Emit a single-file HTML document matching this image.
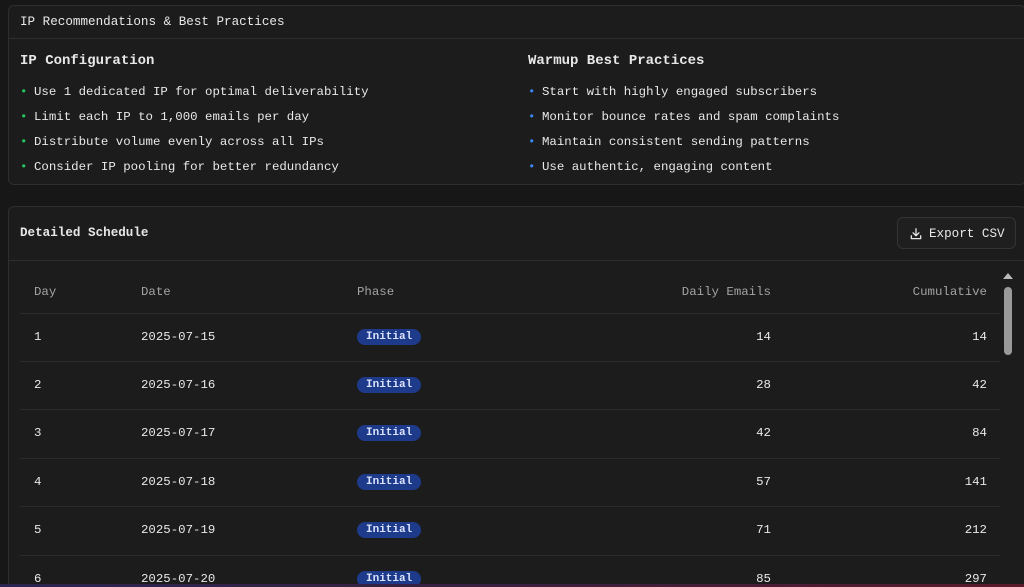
<!DOCTYPE html>
<html><head><style>
*{box-sizing:border-box;margin:0;padding:0}
html,body{width:1024px;height:587px;overflow:hidden}
body{background:#171717;font-family:"Liberation Mono",monospace;color:#e8e8e8;font-size:12.4px;position:relative}
.card{position:absolute;left:8px;right:-2px;background:#1c1c1c;border:1px solid #2e2e2e;border-radius:6px}
.c1{top:5px;height:180px}
.hd{height:33px;border-bottom:1px solid #2e2e2e;padding:9px 11px;font-size:12.6px}
.col{position:absolute;top:47px}
.col h3{font-size:14px;font-weight:bold;margin-bottom:13px;height:18px}
.col li{list-style:none;height:25px;line-height:17px}
.col li b{display:inline-block;width:14px;font-weight:normal}
.c2{top:206px;height:400px}
.btn{position:absolute;left:888px;top:10px;width:119px;height:32px;border:1px solid #333;border-radius:6px;background:#1f1f1f;font-size:12.6px;padding:9px 0 0 31px}
.btn svg{position:absolute;left:11px;top:9px}
.row{position:absolute;left:0;width:981px;border-bottom:1px solid #2b2b2b}
.row span{position:absolute}
.pill{background:#1e3a8a;color:#dbe4ff;border-radius:10px;padding:2px 9px;font-size:11px;font-weight:bold}
.sb{position:absolute;left:1000px;top:270px;width:14px;height:320px;background:#1c1c1c}
.th{position:absolute;left:1004px;top:287px;width:8px;height:68px;background:#9a9a9a;border-radius:4px}
</style></head><body>
<div class="card c1">
<div class="hd">IP Recommendations &amp; Best Practices</div>
<div class="col" style="left:11px"><h3>IP Configuration</h3><ul>
<li><b style="color:#22c55e">•</b>Use 1 dedicated IP for optimal deliverability</li>
<li><b style="color:#22c55e">•</b>Limit each IP to 1,000 emails per day</li>
<li><b style="color:#22c55e">•</b>Distribute volume evenly across all IPs</li>
<li><b style="color:#22c55e">•</b>Consider IP pooling for better redundancy</li></ul></div>
<div class="col" style="left:519px"><h3>Warmup Best Practices</h3><ul>
<li><b style="color:#3b82f6">•</b>Start with highly engaged subscribers</li>
<li><b style="color:#3b82f6">•</b>Monitor bounce rates and spam complaints</li>
<li><b style="color:#3b82f6">•</b>Maintain consistent sending patterns</li>
<li><b style="color:#3b82f6">•</b>Use authentic, engaging content</li></ul></div>
</div>
<div class="card c2">
<div class="hd" style="height:54px;padding-top:19px;font-weight:bold">Detailed Schedule</div>
<div class="btn"><svg width="14" height="14" viewBox="0 0 24 24" fill="none" stroke="#e5e5e5" stroke-width="2.2" stroke-linecap="round" stroke-linejoin="round"><path d="M12 3v12M7 10l5 5 5-5M4 15v5h16v-5"/></svg>Export CSV</div>
</div>
<div style="position:absolute;left:20px;top:0;width:981px">
<div class="row" style="top:260px;height:54px;color:#a3a3a3"><span style="left:14px;top:25px">Day</span><span style="left:121px;top:25px">Date</span><span style="left:337px;top:25px">Phase</span><span style="right:230px;top:25px">Daily Emails</span><span style="right:14px;top:25px">Cumulative</span></div>
<div class="row" style="top:314px;height:48px"><span style="left:14px;top:16px">1</span><span style="left:121px;top:16px">2025-07-15</span><span class="pill" style="left:337px;top:15px">Initial</span><span style="right:230px;top:16px">14</span><span style="right:14px;top:16px">14</span></div>
<div class="row" style="top:362px;height:48px"><span style="left:14px;top:16px">2</span><span style="left:121px;top:16px">2025-07-16</span><span class="pill" style="left:337px;top:15px">Initial</span><span style="right:230px;top:16px">28</span><span style="right:14px;top:16px">42</span></div>
<div class="row" style="top:410px;height:49px"><span style="left:14px;top:16px">3</span><span style="left:121px;top:16px">2025-07-17</span><span class="pill" style="left:337px;top:15px">Initial</span><span style="right:230px;top:16px">42</span><span style="right:14px;top:16px">84</span></div>
<div class="row" style="top:459px;height:48px"><span style="left:14px;top:16px">4</span><span style="left:121px;top:16px">2025-07-18</span><span class="pill" style="left:337px;top:15px">Initial</span><span style="right:230px;top:16px">57</span><span style="right:14px;top:16px">141</span></div>
<div class="row" style="top:507px;height:49px"><span style="left:14px;top:16px">5</span><span style="left:121px;top:16px">2025-07-19</span><span class="pill" style="left:337px;top:15px">Initial</span><span style="right:230px;top:16px">71</span><span style="right:14px;top:16px">212</span></div>
<div class="row" style="top:556px;height:48px;border:none"><span style="left:14px;top:16px">6</span><span style="left:121px;top:16px">2025-07-20</span><span class="pill" style="left:337px;top:15px">Initial</span><span style="right:230px;top:16px">85</span><span style="right:14px;top:16px">297</span></div>
</div>
<div class="sb"></div><div class="th"></div>
<div style="position:absolute;left:1003px;top:273px;width:0;height:0;border-left:5px solid transparent;border-right:5px solid transparent;border-bottom:6px solid #bbb"></div>
<div style="position:absolute;left:0;top:584px;width:1024px;height:3px;background:linear-gradient(90deg,#2a2550,#3a2040,#5a1a2a)"></div>
</body></html>
